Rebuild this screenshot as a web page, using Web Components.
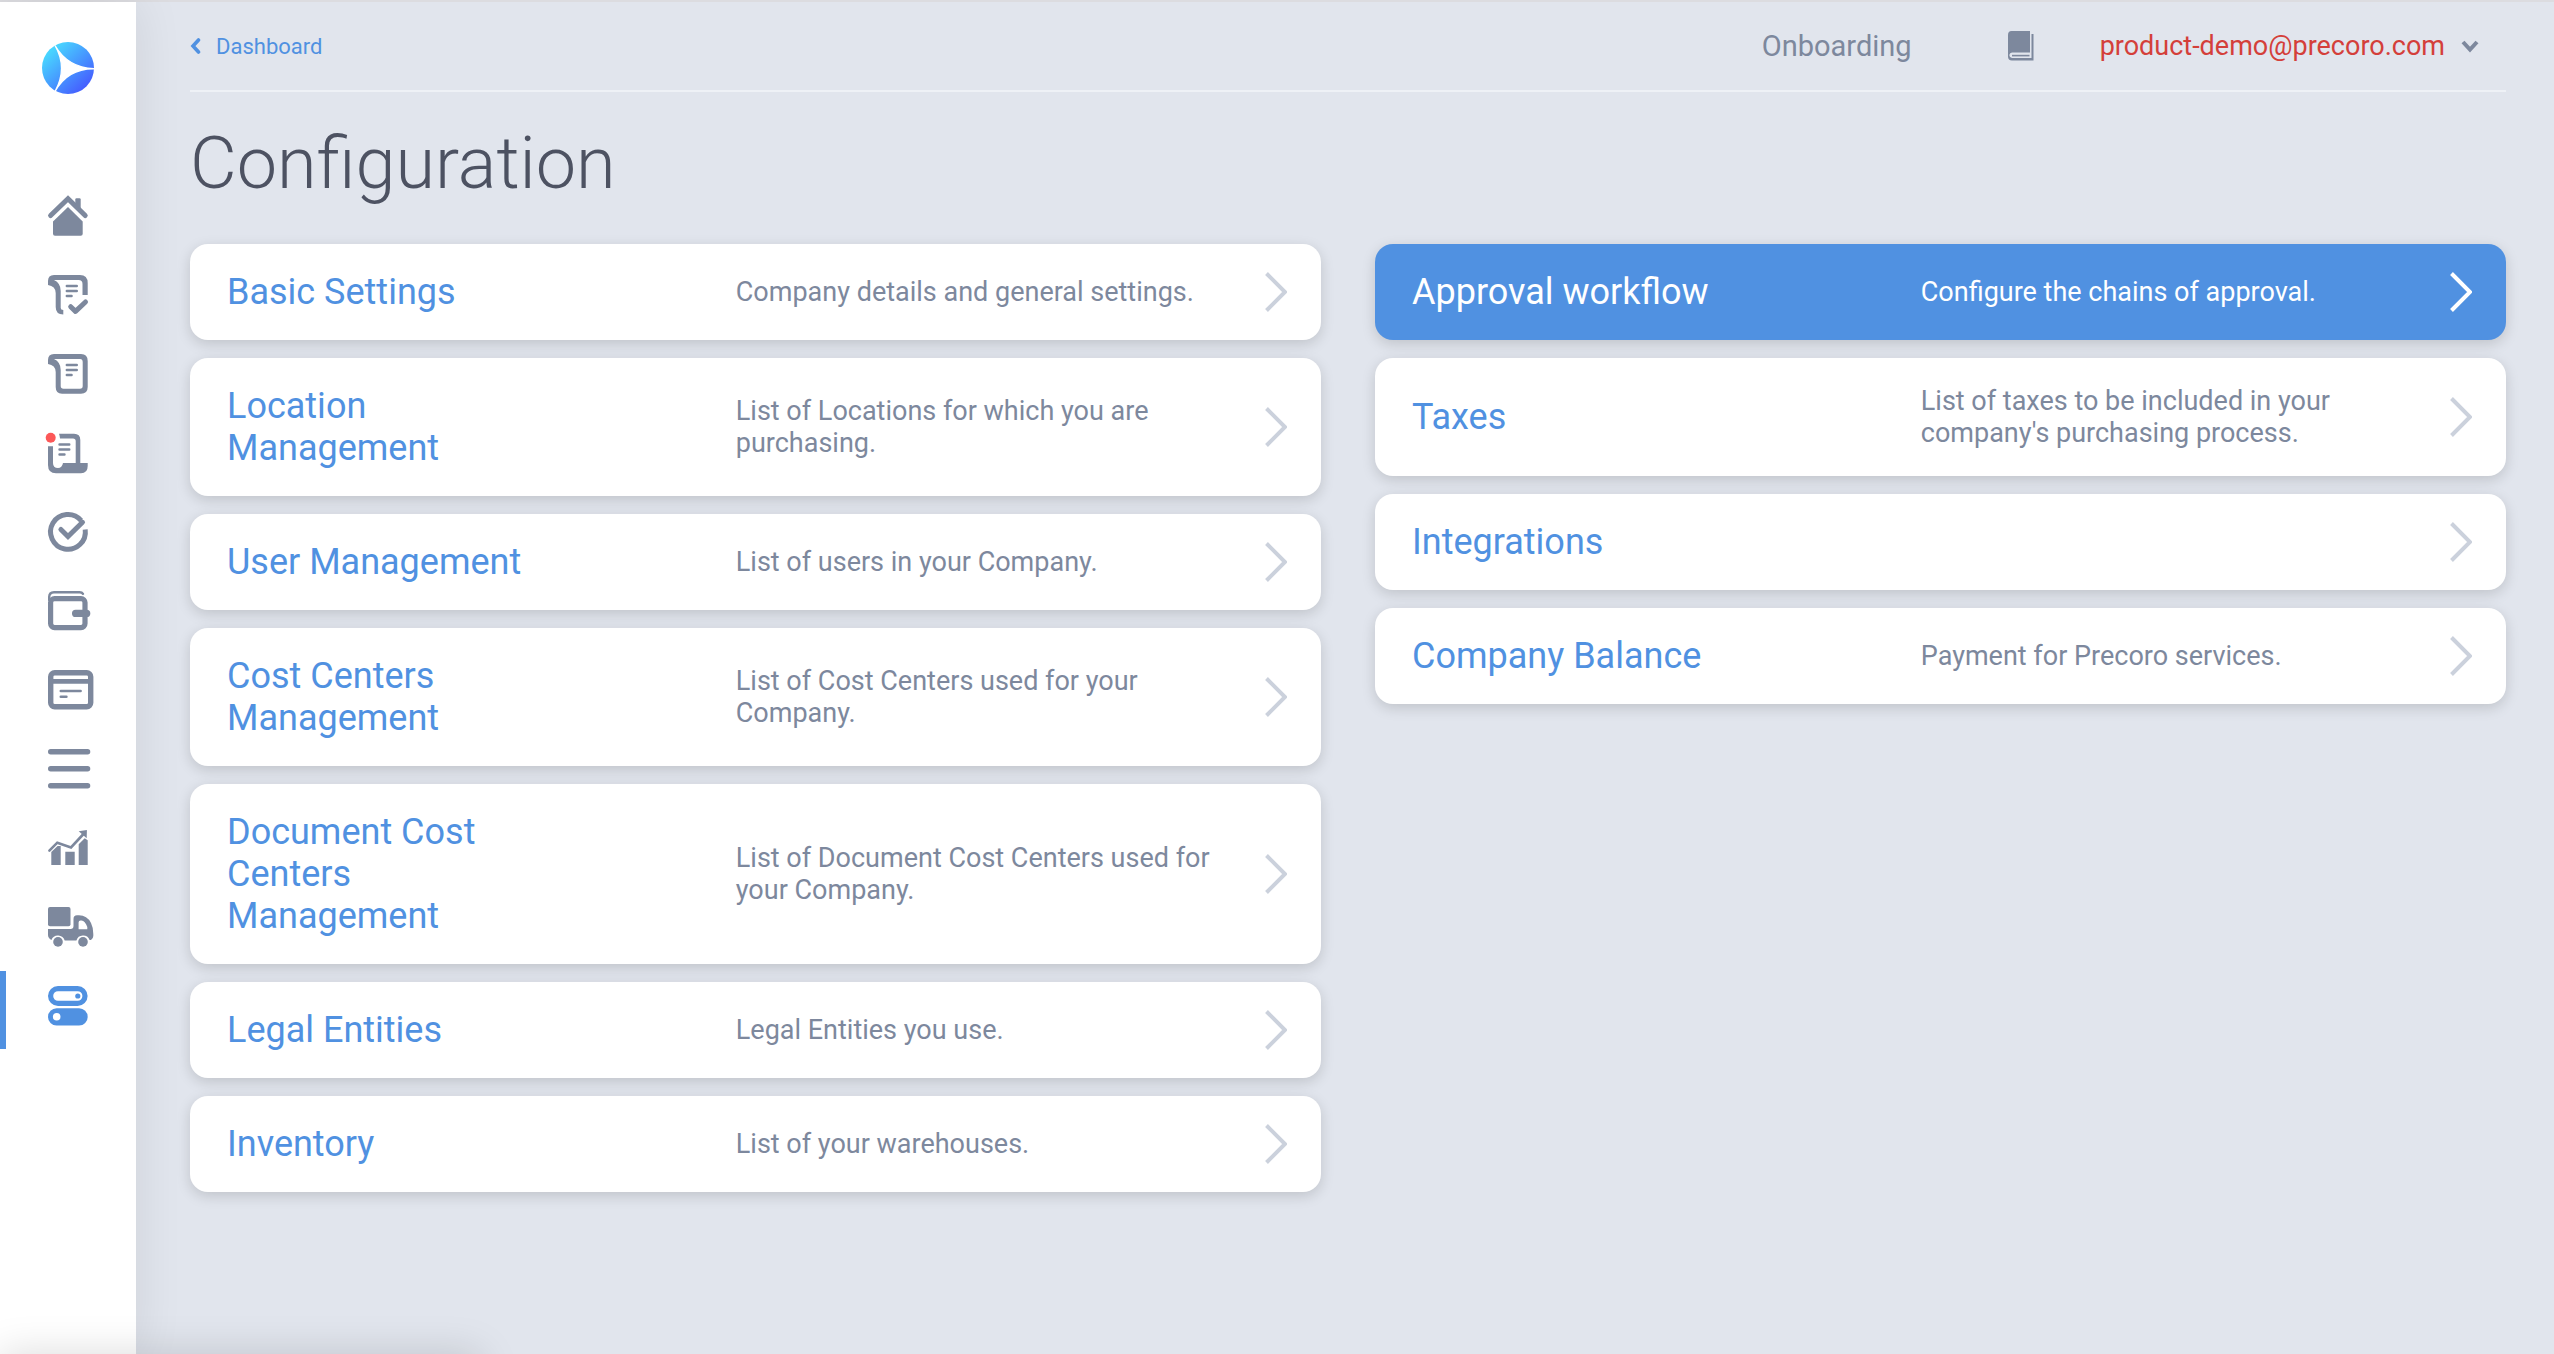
<!DOCTYPE html>
<html lang="en">
<head>
<meta charset="utf-8">
<meta name="viewport" content="width=device-width, initial-scale=1">
<title>Configuration</title>
<style>
  body {
    --blue: #5091e1;
    --grey: #7d889d;
    --dark: #4d5262;
    --page: #e1e5ed;
    margin: 0;
    font-family: Roboto, "Liberation Sans", sans-serif;
    color: var(--grey);
    background: var(--page);
  }
</style>
</head>
<body>
<config-app></config-app>

<script>
const ICONS = {
  home: `
    <path d="M2.6 19.5L20 2.8L37.2 19.5" class="line" stroke-width="5"/>
    <path d="M27.3 3.5Q27.3 2.3 28.5 2.3H31.5Q32.7 2.3 32.7 3.5V14L27.3 9Z"/>
    <path d="M20 11L34.7 25.5V37.7Q34.7 39.7 32.7 39.7H7Q5 39.7 5 37.7V25.5Z"/>`,
  requisition: `
    <path d="M0 10V6Q0 0 6 0H32Q39.7 0 39.7 8V20H34.5V9Q34.5 5 30.5 5H6Q12.7 8 12.7 16V33Q12.7 35 15.3 35V39.5Q7.7 39.5 7.7 32V18Q7.5 11 0 10Z"/>
    <path d="M18.8 11H28.8M18.8 16H28.8M18.8 21H23.6" class="line" stroke-width="2.4"/>
    <path d="M22.7 31.7L27.5 36.4L37.5 27" class="line" stroke-width="5" stroke-linejoin="round"/>`,
  order: `
    <path fill-rule="evenodd" d="M0 10V6Q0 0 6 0H33Q39.7 0 39.7 7V33Q39.7 39.7 33 39.7H14Q7.7 39.7 7.7 33V18Q7.5 11 0 10ZM6 5Q12.7 8 12.7 16V32Q12.7 34.7 15.5 34.7H32Q34.7 34.7 34.7 32V8Q34.7 5 32 5Z"/>
    <path d="M18.8 11H28.8M18.8 16H28.8M18.8 21H23.6" class="line" stroke-width="2.4"/>`,
  invoice: `
    <circle cx="2.7" cy="4.7" r="5" fill="#fc5858"/>
    <path d="M11 .7H26Q32.3 .7 32.3 7V30H39.7V33Q39.7 40.3 33 40.3H8Q0 40.3 0 32V13.3H5V30Q5 35 10 35Q14 35 15 30H27.7V8Q27.7 5.5 25 5.5H12Q11.8 3 11 .7Z"/>
    <path d="M11.5 11.5H21.3M11.5 16.5H21.3M11.5 21.5H16.5" class="line" stroke-width="2.4"/>`,
  approve: `
    <path d="M37.2 17.5A17.4 17.4 0 1 1 33.2 8.6" class="line" stroke-width="5" stroke-linecap="butt"/>
    <path d="M12.9 17.5L20 24.5L34.5 10.3" class="line" stroke-width="5"/>`,
  wallet: `
    <path d="M1.2 9V6Q1.2 1.2 6 1.2H31.5Q34 1.2 35 2.8" class="line" stroke-width="2.4"/>
    <rect x="2.6" y="7.6" width="34.4" height="29" rx="4" class="line" stroke-width="5.2"/>
    <rect x="24" y="18.7" width="18.3" height="7.3" rx="3.6"/>`,
  budget: `
    <rect x="2.7" y="2.7" width="40" height="34" rx="4" class="line" stroke-width="5.4"/>
    <path d="M3 8.9H42V13.8H3Z"/>
    <path d="M12.8 21H32.6M12.8 26.7H18.4" class="line" stroke-width="2.6"/>`,
  list: `<path d="M2.7 2.7H39.6M2.7 19.7H39.6M2.7 36.7H39.6" class="line" stroke-width="5.4"/>`,
  chart: `
    <path d="M1.4 22.6L9.3 14.7L23 19.5L35.5 6" class="line" stroke-width="2.6"/>
    <path d="M30.7 3.2L38.9 2L38.7 10.3Z"/>
    <path d="M3.3 24L9.6 18H12.7V37H3.3ZM17.3 23.7H26.7V37H17.3ZM30.7 16.3L36.7 10.3L39.7 12.3V37H30.7Z"/>`,
  truck: `
    <rect width="22.5" height="19.3" rx="2"/>
    <path fill-rule="evenodd" d="M0 22H22.5Q25.5 22 25.5 19V12Q25.5 8.3 29 8.3H31Q39 8.3 43 16Q45.3 20.5 45.3 27V29Q45.3 31.5 43 33H41.6A7 7 0 0 0 28.4 33.6H16.7A7 7 0 0 0 3.4 33Q0 31 0 28ZM30.6 22.3V15.5Q30.6 13.6 32.5 13.6H33.5Q37 14 39.3 20V22.3Z"/>
    <circle cx="10" cy="34.9" r="4.8"/><circle cx="35" cy="34.9" r="4.8"/>`,
  settings: `
    <rect x="2.6" y="2.6" width="34.4" height="14.8" rx="7.4" class="line" stroke-width="5.2"/>
    <circle cx="29.8" cy="10" r="2.6"/>
    <rect y="22.3" width="39.7" height="17.2" rx="8.6"/>
    <circle cx="8.7" cy="30.8" r="3.8" fill="#fff"/>`
};

class NavLink extends HTMLElement {
  constructor() {
    super();
    this._root = this.attachShadow({mode: 'open'});
  }

  connectedCallback() {
    this._root.innerHTML = `
    <style>
      :host {
        display: block;
        color: var(--grey);
      }
      :host([active]) {
        color: var(--blue);
      }
      a {
        display: block;
        box-sizing: border-box;
        height: 78px;
        padding: 15px 0 0 42px;
        border-left: 6px solid transparent;
        color: inherit;
      }
      :host([active]) a {
        border-color: currentColor;
      }
      svg {
        display: block;
        width: 48px;
        height: 40px;
        overflow: visible;
        fill: currentColor;
      }
      .line {
        fill: none;
        stroke: currentColor;
        stroke-linecap: round;
      }
      .line[stroke-linecap="butt"] {
        stroke-linecap: butt;
      }
    </style>
    <a href="#" aria-label="${this.getAttribute('label')}">
      <svg viewBox="0 0 48 40" aria-hidden="true">${ICONS[this.getAttribute('icon')]}</svg>
    </a>`;
  }
}

class AppSidebar extends HTMLElement {
  constructor() {
    super();
    this._root = this.attachShadow({mode: 'open'});
  }

  connectedCallback() {
    this._root.innerHTML = `
    <style>
      :host {
        display: block;
        background: #fff;
        box-shadow: 0 0 50px rgba(0, 0, 0, .09);
      }
      .logo {
        display: block;
        width: 52px;
        margin: 40px 42px 87px;
      }
      .logo svg {
        display: block;
        width: 52px;
        height: 52px;
      }
      nav {
        display: flex;
        flex-direction: column;
        gap: 1px;
      }
    </style>
    <a class="logo" href="#" aria-label="Home page">
      <svg viewBox="0 0 52 52" aria-hidden="true">
        <defs>
          <linearGradient id="g" x1=".15" y1=".2" x2=".8" y2=".9">
            <stop offset="0" stop-color="#48d4ff"/>
            <stop offset="1" stop-color="#455fff"/>
          </linearGradient>
        </defs>
        <circle cx="26" cy="26" r="26" fill="url(#g)"/>
        <path d="M13 3.5Q26 26 53 26.8Q26 26 13 49.5Q26 26 13 3.5Z" fill="#fff" stroke="#fff" stroke-width="1.3"/>
      </svg>
    </a>
    <nav><slot></slot></nav>`;
  }
}

class PageHeader extends HTMLElement {
  constructor() {
    super();
    this._root = this.attachShadow({mode: 'open'});
  }

  connectedCallback() {
    this._root.innerHTML = `
    <style>
      :host {
        display: flex;
        align-items: center;
        justify-content: space-between;
        height: 88px;
        border-bottom: 2px solid #eef1f6;
      }
      a {
        color: inherit;
        text-decoration: none;
      }
      svg {
        display: block;
      }
      .back {
        display: flex;
        align-items: center;
        gap: 15px;
        font-size: 22px;
        color: var(--blue);
      }
      .tools {
        display: flex;
        align-items: center;
        font-size: 29px;
      }
      .book {
        margin: 0 66px 0 96px;
      }
      .user {
        display: flex;
        align-items: center;
        gap: 16px;
        padding: 0 27px 0 0;
        border: 0;
        background: none;
        font: inherit;
        font-size: 27px;
        color: #d43f3a;
      }
    </style>
    <a class="back" href="#">
      <svg width="11" height="16" viewBox="0 0 11 16" aria-hidden="true"><path d="M8.5 2L3 8L8.5 14" fill="none" stroke="currentColor" stroke-width="3.6" stroke-linecap="round"/></svg>
      <slot name="back"></slot>
    </a>
    <div class="tools">
      <a href="#"><slot name="help"></slot></a>
      <a class="book" href="#" aria-label="Knowledge base">
        <svg width="26" height="30" viewBox="0 0 26 30" fill="#7d889d" aria-hidden="true">
          <path d="M3.5 0H22V21.5H4Q1.8 21.5 1.3 24Q1.3 26.5 4 27H23.5V3H25.5V29.5H4Q0 29.5 0 25.5V4Q0 0 3.5 0Z"/>
          <path d="M4 23.8H21.5V25.4H4Z"/>
        </svg>
      </a>
      <button class="user" type="button">
        <slot name="user"></slot>
        <svg width="18" height="14" viewBox="0 0 18 14" aria-hidden="true"><path d="M2 3L9 10.5L16 3" fill="none" stroke="#7d889d" stroke-width="4"/></svg>
      </button>
    </div>`;
  }
}

class ConfigCard extends HTMLElement {
  constructor() {
    super();
    this._root = this.attachShadow({mode: 'open'});
  }

  connectedCallback() {
    this._root.innerHTML = `
    <style>
      :host {
        display: block;
        --title: var(--blue);
        --text: var(--grey);
        --arrow: #cbd1dc;
        --fill: #fff;
      }
      :host([active]) {
        --title: #fff;
        --text: #fff;
        --arrow: #fff;
        --fill: var(--blue);
      }
      a {
        display: grid;
        grid-template-columns: 32% 16% 1fr 22px;
        align-items: center;
        padding: 27px 34px 27px 37px;
        border-radius: 18px;
        background: var(--fill);
        box-shadow: 0 4px 14px rgba(0, 0, 0, .15);
        text-decoration: none;
      }
      .title {
        font-size: 36px;
        line-height: 42px;
        color: var(--title);
      }
      .text {
        grid-column: 3;
        padding-right: 30px;
        font-size: 27px;
        line-height: 32px;
        color: var(--text);
      }
      svg {
        display: block;
      }
    </style>
    <a href="#">
      <span class="title"><slot></slot></span>
      <span class="text"><slot name="text"></slot></span>
      <svg width="22" height="40" viewBox="0 0 22 40" aria-hidden="true"><path d="M1.5 1.5L20 20L1.5 38.5" fill="none" stroke="var(--arrow)" stroke-width="4"/></svg>
    </a>`;
  }
}

class ConfigApp extends HTMLElement {
  constructor() {
    super();
    this._root = this.attachShadow({mode: 'open'});
  }

  connectedCallback() {
    this._root.innerHTML = `
    <style>
      :host {
        display: grid;
        grid-template-columns: 136px 1fr;
        box-sizing: border-box;
        min-height: 100vh;
        border-top: 2px solid #dcdce0;
      }
      main {
        padding: 0 48px 48px 54px;
      }
      h1 {
        margin: 0;
        padding: 30px 0 38px;
        font-size: 72px;
        line-height: 84px;
        font-weight: 300;
        color: var(--dark);
      }
      .columns {
        display: grid;
        grid-template-columns: 1fr 1fr;
        gap: 54px;
        align-items: start;
      }
      section {
        display: flex;
        flex-direction: column;
        gap: 18px;
      }
      /* soft shade cast by the link preview under the lower left corner */
      .preview {
        position: fixed;
        left: 0;
        bottom: -40px;
        width: 480px;
        height: 40px;
        box-shadow: 0 0 40px rgba(0, 0, 0, .15);
        pointer-events: none;
      }
    </style>
    <app-sidebar>
      <nav-link icon="home" label="Home"></nav-link>
      <nav-link icon="requisition" label="Purchase requisitions"></nav-link>
      <nav-link icon="order" label="Purchase orders"></nav-link>
      <nav-link icon="invoice" label="Invoices"></nav-link>
      <nav-link icon="approve" label="Approvals"></nav-link>
      <nav-link icon="wallet" label="Payments"></nav-link>
      <nav-link icon="budget" label="Budgets"></nav-link>
      <nav-link icon="list" label="Items"></nav-link>
      <nav-link icon="chart" label="Reports"></nav-link>
      <nav-link icon="truck" label="Suppliers"></nav-link>
      <nav-link icon="settings" label="Configuration" active></nav-link>
    </app-sidebar>
    <main>
      <page-header>
        <span slot="back">Dashboard</span>
        <span slot="help">Onboarding</span>
        <span slot="user">product-demo@precoro.com</span>
      </page-header>
      <h1>Configuration</h1>
      <div class="columns">
        <section>
          <config-card>Basic Settings<span slot="text">Company details and general settings.</span></config-card>
          <config-card>Location Management<span slot="text">List of Locations for which you are purchasing.</span></config-card>
          <config-card>User Management<span slot="text">List of users in your Company.</span></config-card>
          <config-card>Cost Centers Management<span slot="text">List of Cost Centers used for your Company.</span></config-card>
          <config-card>Document Cost Centers Management<span slot="text">List of Document Cost Centers used for your Company.</span></config-card>
          <config-card>Legal Entities<span slot="text">Legal Entities you use.</span></config-card>
          <config-card>Inventory<span slot="text">List of your warehouses.</span></config-card>
        </section>
        <section>
          <config-card active>Approval workflow<span slot="text">Configure the chains of approval.</span></config-card>
          <config-card>Taxes<span slot="text">List of taxes to be included in your company's purchasing process.</span></config-card>
          <config-card>Integrations</config-card>
          <config-card>Company Balance<span slot="text">Payment for Precoro services.</span></config-card>
        </section>
      </div>
    </main>
    <div class="preview"></div>`;
  }
}

window.customElements.define('nav-link', NavLink);
window.customElements.define('app-sidebar', AppSidebar);
window.customElements.define('page-header', PageHeader);
window.customElements.define('config-card', ConfigCard);
window.customElements.define('config-app', ConfigApp);
</script>
</body>
</html>
